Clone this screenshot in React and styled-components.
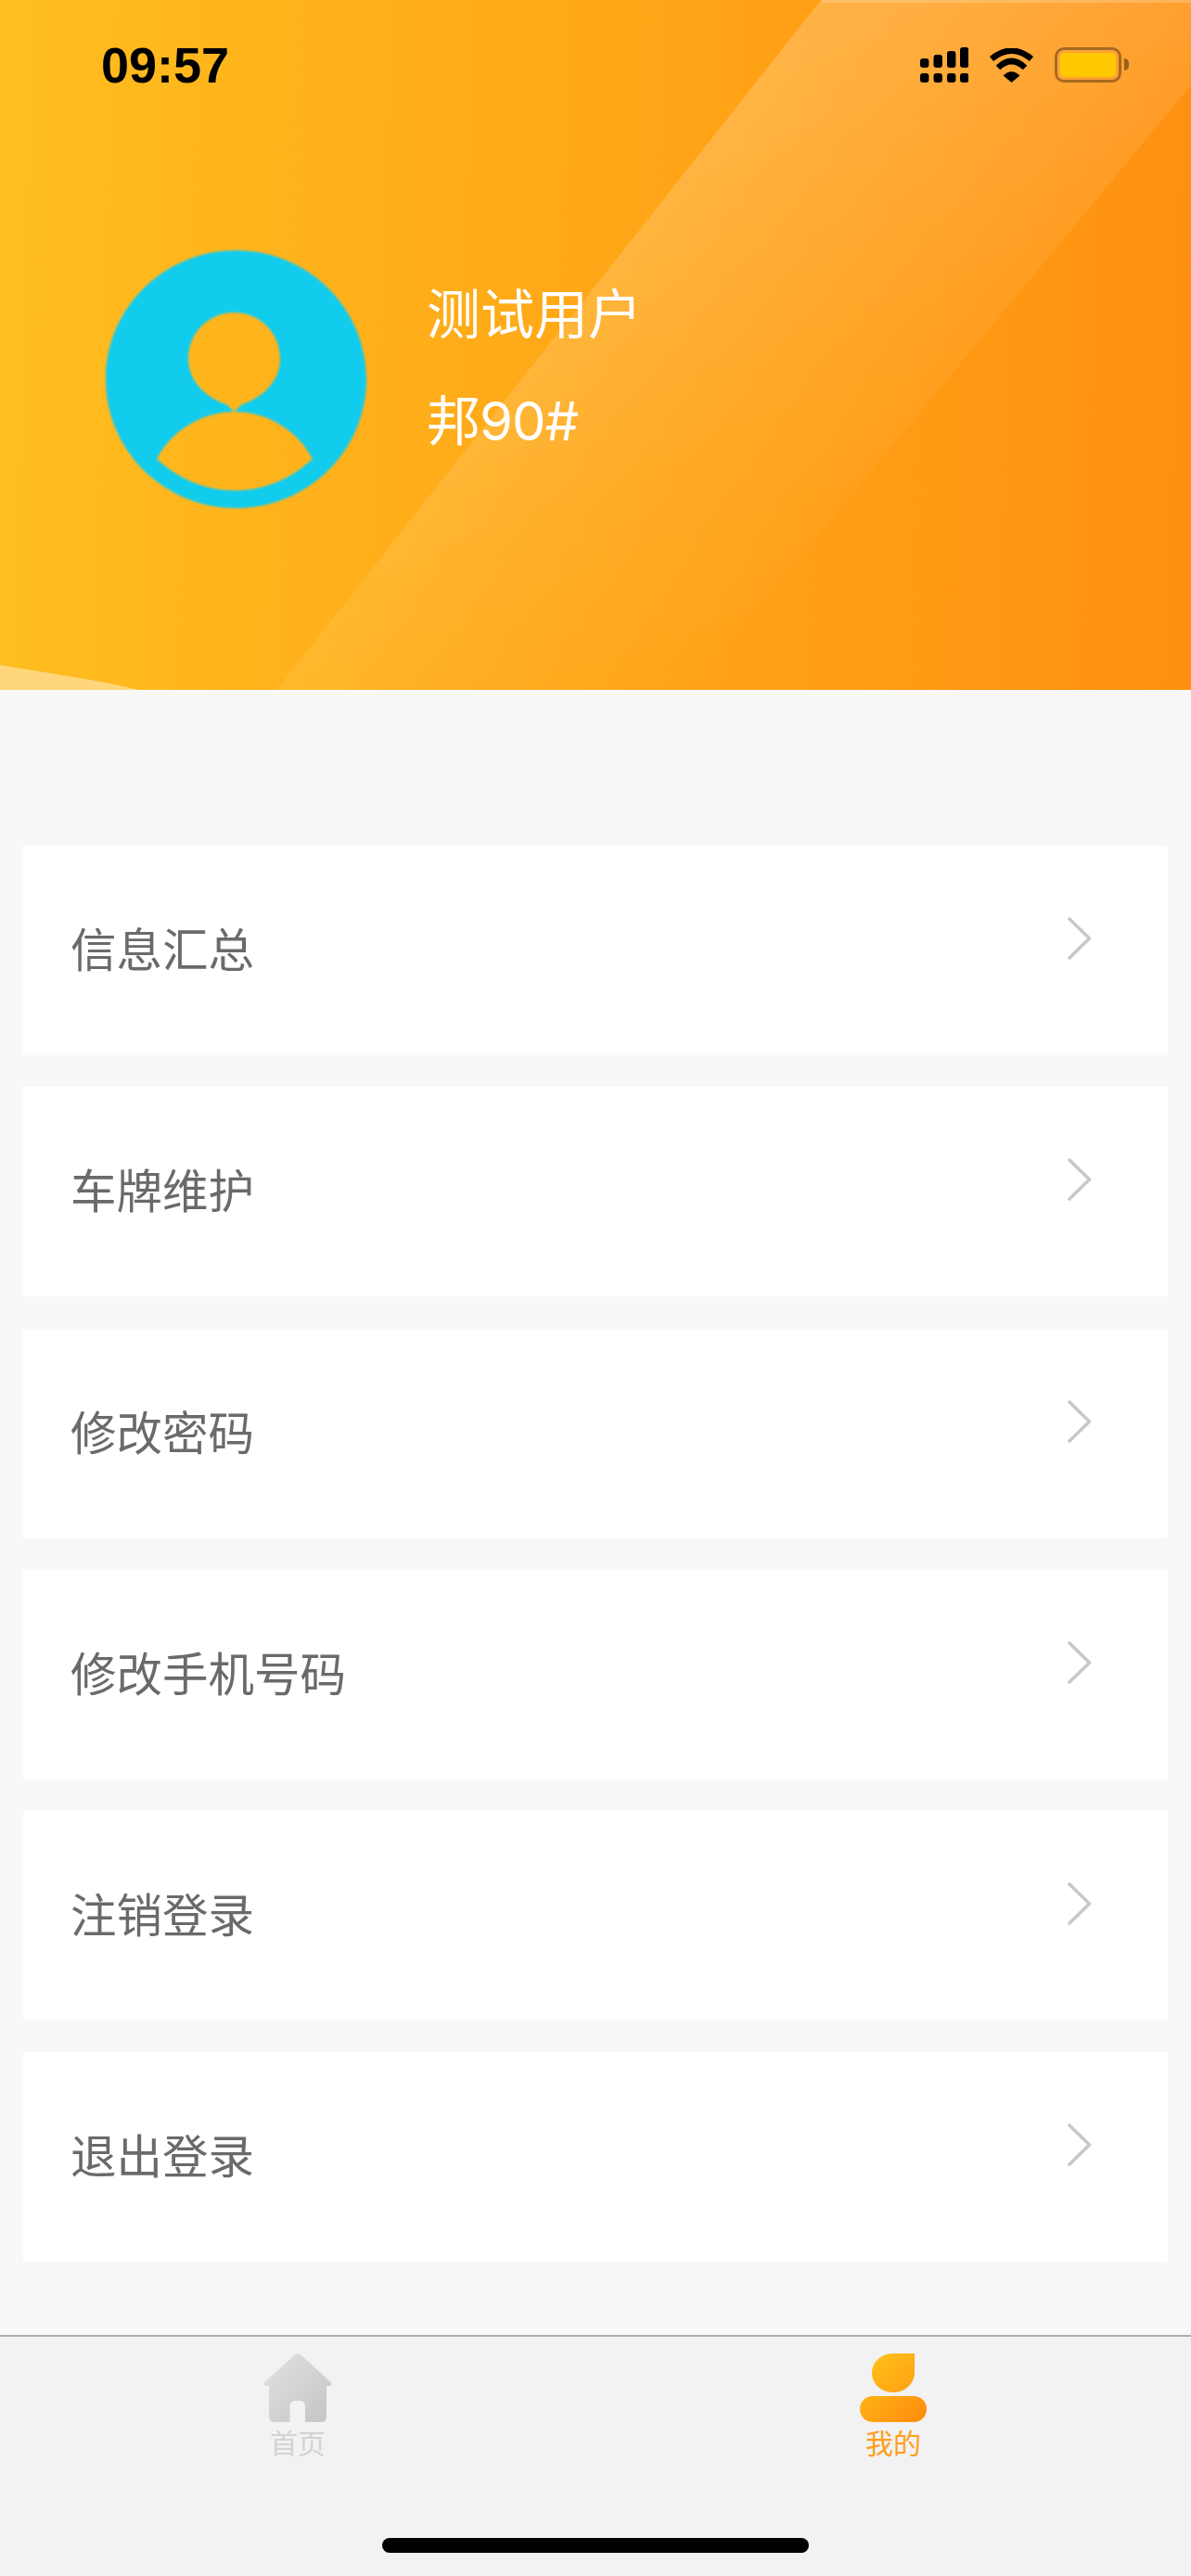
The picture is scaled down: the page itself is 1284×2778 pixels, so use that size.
import React from 'react';
import styled, { createGlobalStyle } from 'styled-components';

const MENU = ['信息汇总', '车牌维护', '修改密码', '修改手机号码', '注销登录', '退出登录'];

const SIGNAL = [
  { x: 0, top: 12 },
  { x: 14.5, top: 8 },
  { x: 29, top: 4 },
  { x: 43, top: 0 },
];

const GlobalStyle = createGlobalStyle`
  html, body {
    margin: 0;
    padding: 0;
    background: #f8f8f8;
  }
  body {
    font-family: "Noto Sans CJK SC", "Noto Sans", sans-serif;
  }
`;

const Page = styled.div`
  display: flex;
  flex-direction: column;
  width: 1284px;
  height: 2778px;
  overflow: hidden;
  background: #f8f8f8;
`;

const Header = styled.header`
  position: relative;
  flex: none;
  height: 744px;
  overflow: hidden;
  background: linear-gradient(92deg, #ffbe1f 0%, #ff9010 100%);

  /* light diagonal band, fades towards the bottom right */
  &::before {
    content: '';
    position: absolute;
    inset: 0;
    background: linear-gradient(
      150deg,
      rgba(255, 255, 255, 0.2) 38%,
      rgba(255, 255, 255, 0.07) 62%,
      rgba(255, 255, 255, 0.03) 72%,
      rgba(255, 255, 255, 0) 80%
    );
    clip-path: polygon(885px 0, 1284px 0, 1284px 92px, 744px 744px, 298px 744px);
  }

  /* thin highlight along the top of the band */
  &::after {
    content: '';
    position: absolute;
    top: 0;
    left: 886px;
    right: 0;
    height: 3px;
    background: rgba(255, 255, 255, 0.2);
  }
`;

const CornerWave = styled.svg`
  position: absolute;
  left: 0;
  bottom: 0;
  display: block;
`;

const StatusBar = styled.div`
  position: relative;
  display: flex;
  align-items: center;
  justify-content: space-between;
  height: 38px;
  padding: 51px 75px 0 109px;
`;

const Clock = styled.span`
  font-family: "Liberation Sans", sans-serif;
  font-size: 54px;
  font-weight: 700;
  line-height: 38px;
  color: #000;
`;

const StatusIcons = styled.div`
  display: flex;
  align-items: center;
  gap: 22px;
`;

const Battery = styled.div`
  position: relative;
  box-sizing: border-box;
  width: 72px;
  height: 38px;
  padding: 3px;
  border: 3px solid rgba(80, 50, 20, 0.5);
  border-radius: 10px;

  &::after {
    content: '';
    position: absolute;
    top: 9px;
    right: -11px;
    width: 5px;
    height: 13px;
    border-radius: 0 7px 7px 0;
    background: rgba(80, 50, 20, 0.6);
  }
`;

const BatteryLevel = styled.div`
  height: 100%;
  border-radius: 5px;
  background: #ffc800;
`;

const Profile = styled.div`
  position: relative;
  display: flex;
  align-items: center;
  gap: 65px;
  padding: 181px 0 0 114px;
`;

const Avatar = styled.svg`
  display: block;
  flex: none;
  filter: blur(1.1px);
`;

const ProfileText = styled.div`
  display: flex;
  flex-direction: column;
  gap: 45px;
  margin-top: -26px;
  color: #fff;
  font-family: Inter, "Noto Sans CJK SC", sans-serif;
  font-size: 58px;
  font-weight: 400;
  line-height: 70px;
`;

const ProfileCode = styled.span`
  letter-spacing: -1px;
`;

const Menu = styled.main`
  flex: 1;
  display: flex;
  flex-direction: column;
  gap: 34.3px;
  padding: 168px 25px 0;
`;

const Row = styled.div`
  display: flex;
  align-items: center;
  justify-content: space-between;
  height: 226px;
  padding: 0 82px 0 51px;
  background: #fff;
`;

const RowLabel = styled.span`
  margin-bottom: 6px;
  font-size: 49.5px;
  font-weight: 400;
  line-height: 60px;
  color: #6a6a6a;
`;

const Chevron = styled.svg`
  display: block;
  margin-bottom: 26px;
`;

const TabBar = styled.nav`
  position: relative;
  flex: none;
  display: grid;
  grid-template-columns: 1fr 1fr;
  box-sizing: border-box;
  height: 260px;
  padding-top: 18px;
  border-top: 2px solid #aeaeae;
  background: #f2f2f2;
`;

const Tab = styled.div`
  display: flex;
  flex-direction: column;
  align-items: center;
  gap: 3px;
  color: ${(p) => (p.$active ? '#ff9f1c' : '#d2d2d2')};
  font-size: 30px;
  font-weight: 400;
  line-height: 36px;
`;

const HomeIndicator = styled.div`
  position: absolute;
  left: 412px;
  bottom: 25px;
  width: 460px;
  height: 16px;
  border-radius: 8px;
  background: #000;
`;

const SignalIcon = () => (
  <svg width="52" height="38" viewBox="0 0 52 38">
    {SIGNAL.map((b) => (
      <g key={b.x} fill="#000">
        <rect x={b.x} y={b.top} width="9.4" height={22 - b.top} rx="3" />
        <rect x={b.x} y="28" width="9.4" height="10" rx="3" />
      </g>
    ))}
  </svg>
);

const WifiIcon = () => (
  <svg width="49" height="37" viewBox="0 0 49 37">
    <path d="M3 11.5Q24.5 -6 46 11.5" fill="none" stroke="#000" strokeWidth="6.5" />
    <path d="M10 21Q24.5 7 39 21" fill="none" stroke="#000" strokeWidth="6.5" />
    <path d="M24.5 37L15.5 29.5Q24.5 21 33.5 29.5Z" fill="#000" />
  </svg>
);

const AvatarIcon = () => (
  <Avatar width="281" height="278" viewBox="0 0 281 278">
    <path
      fillRule="evenodd"
      fill="#12ccee"
      d="M140.5 0C218 0 281 62 281 139S218 278 140.5 278S0 216 0 139S63 0 140.5 0Z
         M138.5 67C111 67 89 89 89 117C89 143 111 160 130 166L138.5 174L147 166C166 160 188 143 188 117C188 89 166 67 138.5 67Z
         M139 174C102 174 70 196 55 225C78 246 106 259 139 259C172 259 200 246 223 225C208 196 176 174 139 174Z"
    />
  </Avatar>
);

const ChevronIcon = () => (
  <Chevron width="26" height="46" viewBox="0 0 26 46">
    <path d="M2 2L23.5 23L2 44" fill="none" stroke="#c8c8c8" strokeWidth="3.6" strokeLinecap="round" strokeLinejoin="round" />
  </Chevron>
);

const HomeIcon = () => (
  <svg width="74" height="74" viewBox="0 0 74 74">
    <defs>
      <linearGradient id="homeFill" x1="0" y1="0" x2="1" y2="1">
        <stop offset="0" stopColor="#e2e2e2" />
        <stop offset="1" stopColor="#c4c4c4" />
      </linearGradient>
    </defs>
    <path
      fill="url(#homeFill)"
      d="M33.5 1.5Q37 -1 40.5 1.5L72.5 31Q74.5 34.5 71 35H68V68Q68 74 62 74H45V57Q45 51 39 51H34Q28.5 51 28.5 57V74H12Q6 74 6 68V35H3Q-0.5 34.5 1.5 31Z"
    />
  </svg>
);

const MineIcon = () => (
  <svg width="74" height="74" viewBox="0 0 74 74">
    <defs>
      <linearGradient id="mineFill" gradientUnits="userSpaceOnUse" x1="4" y1="0" x2="70" y2="74">
        <stop offset="0" stopColor="#ffc81a" />
        <stop offset="1" stopColor="#ff8b0e" />
      </linearGradient>
    </defs>
    <path fill="url(#mineFill)" d="M60 0V20C60 33 49 42 37 42C24 42 14 33 14 21C14 9 24 0 37 0Z" />
    <rect fill="url(#mineFill)" x="1" y="46" width="72" height="28" rx="14" />
  </svg>
);

const App = () => (
  <Page>
    <GlobalStyle />
    <Header>
      <CornerWave width="160" height="30" viewBox="0 0 160 30">
        <path d="M0 3C50 12 100 18 150 30H0Z" fill="#ffd67c" />
      </CornerWave>
      <StatusBar>
        <Clock>09:57</Clock>
        <StatusIcons>
          <SignalIcon />
          <WifiIcon />
          <Battery>
            <BatteryLevel />
          </Battery>
        </StatusIcons>
      </StatusBar>
      <Profile>
        <AvatarIcon />
        <ProfileText>
          <span>测试用户</span>
          <ProfileCode>邦90#</ProfileCode>
        </ProfileText>
      </Profile>
    </Header>
    <Menu>
      {MENU.map((label) => (
        <Row key={label}>
          <RowLabel>{label}</RowLabel>
          <ChevronIcon />
        </Row>
      ))}
    </Menu>
    <TabBar>
      <Tab>
        <HomeIcon />
        首页
      </Tab>
      <Tab $active>
        <MineIcon />
        我的
      </Tab>
      <HomeIndicator />
    </TabBar>
  </Page>
);

export default App;
